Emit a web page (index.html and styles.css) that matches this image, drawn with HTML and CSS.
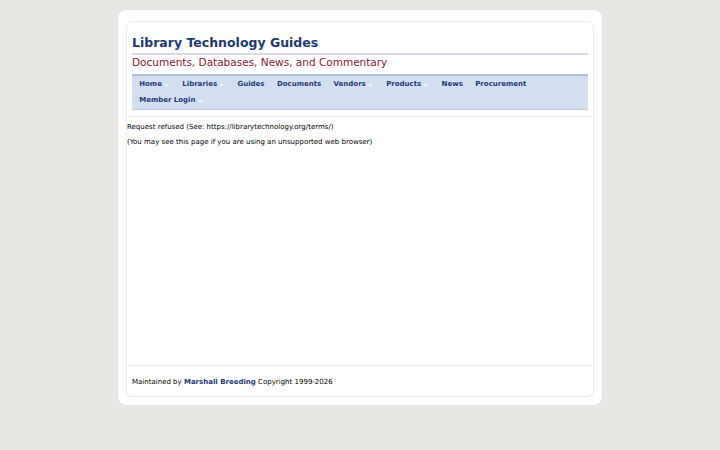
FILE: index.html
```html
<!DOCTYPE html>
<html lang="en">
<head>
<meta charset="utf-8">
<title>Library Technology Guides</title>
<link rel="stylesheet" href="styles.css">
</head>
<body>
<div class="page">
  <div class="inner">
    <div class="header">
      <div class="title">Library Technology Guides</div>
      <div class="subtitle">Documents, Databases, News, and Commentary</div>
      <nav class="nav">
        <span class="item">Home<svg class="caret" width="5" height="3" viewBox="0 0 5 3"><path d="M0 0L2.5 3L5 0Z"/></svg></span>
        <span class="item">Libraries<svg class="caret" width="5" height="3" viewBox="0 0 5 3"><path d="M0 0L2.5 3L5 0Z"/></svg></span>
        <span class="item">Guides</span>
        <span class="item">Documents</span>
        <span class="item">Vendors<svg class="caret" width="5" height="3" viewBox="0 0 5 3"><path d="M0 0L2.5 3L5 0Z"/></svg></span>
        <span class="item">Products<svg class="caret" width="5" height="3" viewBox="0 0 5 3"><path d="M0 0L2.5 3L5 0Z"/></svg></span>
        <span class="item">News</span>
        <span class="item">Procurement</span>
        <span class="item">Member Login<svg class="caret" width="5" height="3" viewBox="0 0 5 3"><path d="M0 0L2.5 3L5 0Z"/></svg></span>
      </nav>
    </div>
    <div class="content">
      <p>Request refused (See: https://librarytechnology.org/terms/)</p>
      <p>(You may see this page if you are using an unsupported web browser)</p>
    </div>
    <div class="footer">Maintained by <a class="author" href="#">Marshall Breeding</a> Copyright 1999-2026</div>
  </div>
</div>
</body>
</html>
```
FILE: styles.css
```css
html, body {
  margin: 0;
  padding: 0;
}
body {
  background: #e8e7e3;
  font-family: "DejaVu Sans", Verdana, sans-serif;
  color: #000;
}
.page {
  width: 468px;
  margin: 10px auto 0;
  padding: 11px 8px 8px;
  background: #fff;
  border-radius: 8px;
  box-shadow: 0 0 2px rgba(0,0,0,0.06);
}
.inner {
  height: 374px;
  border: 1px solid #ececec;
  border-radius: 6px;
  display: flex;
  flex-direction: column;
}
.header {
  padding: 13px 5px 6px;
  border-bottom: 1px solid #ececec;
}
.title {
  font-size: 12.5px;
  line-height: 15px;
  font-weight: bold;
  color: #1e3a6e;
  padding-bottom: 3px;
  border-bottom: 2px solid #d3dce8;
}
.subtitle {
  font-size: 10.5px;
  line-height: 13px;
  color: #8a1a2c;
  margin-top: 1px;
  margin-bottom: 5px;
}
.nav {
  display: flex;
  flex-wrap: wrap;
  background: #d3dff0;
  border-top: 2px solid #b0c1da;
  border-bottom: 1px solid #b9c8de;
  padding: 0 0 1px 1px;
}
.item {
  font-size: 7px;
  line-height: 16px;
  font-weight: bold;
  color: #1e3a78;
  padding: 0 6.2px;
  display: flex;
  align-items: center;
}
.caret {
  fill: #eef3fa;
  margin-left: 2px;
  margin-right: 1px;
  margin-top: 3px;
}
.content {
  flex: 1;
  padding: 6px 0 0 0;
  font-size: 7px;
  line-height: 9px;
}
.content p {
  margin: 0 0 6px;
}
.footer {
  border-top: 1px solid #ececec;
  padding: 12px 5px 9px;
  font-size: 7px;
  line-height: 9px;
}
.author {
  color: #1e3a78;
  font-weight: bold;
  text-decoration: none;
}
```
